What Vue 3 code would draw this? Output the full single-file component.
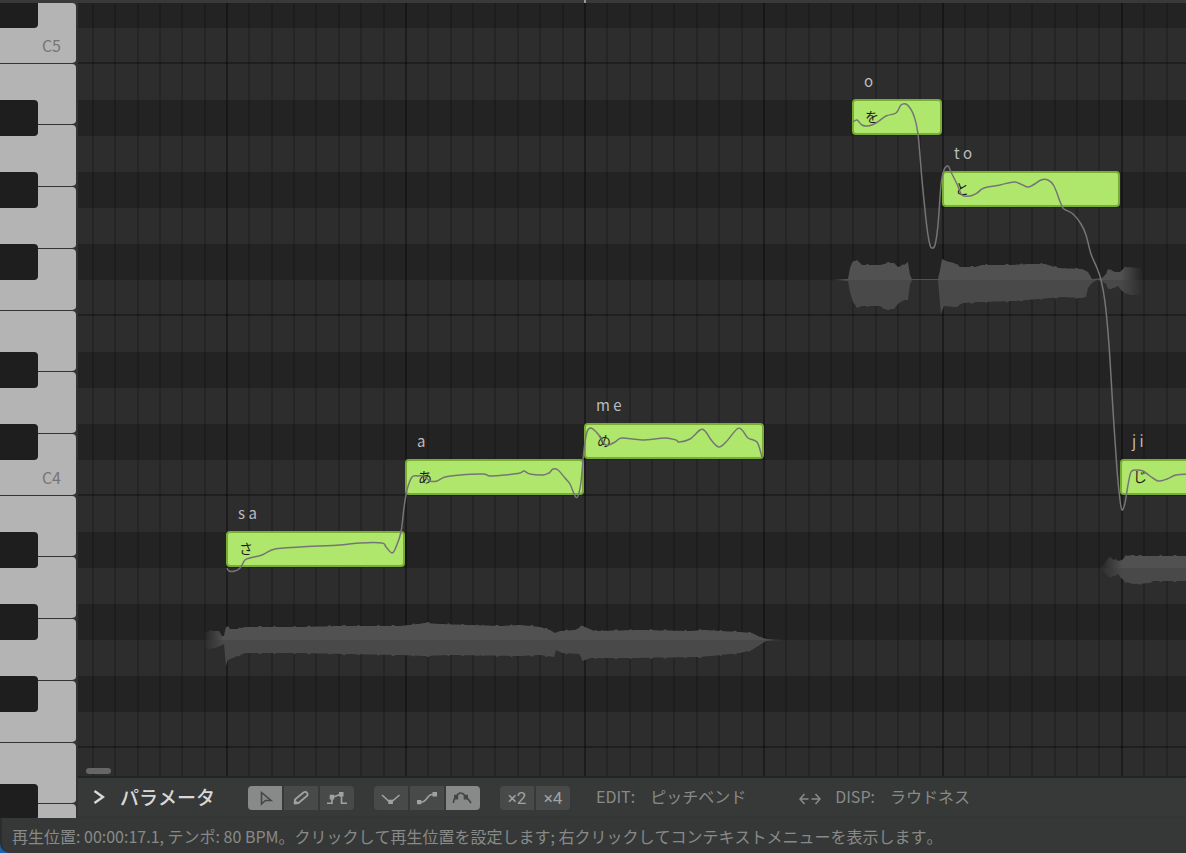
<template>
  <div class="editor">
    <!-- ルーラー -->
    <div class="ruler">
      <span class="ruler-tick"></span>
    </div>

    <main class="workspace">
      <!-- 鍵盤 -->
      <div class="keyboard">
        <div
          v-for="key in whiteKeys"
          :key="key.id"
          class="white-key"
          :style="{ height: key.height + 'px' }"
        >
          <span v-if="key.label" class="key-label">{{ key.label }}</span>
        </div>
        <div
          v-for="top in blackKeys"
          :key="top"
          class="black-key"
          :style="{ top: top - ORIGIN_Y + 'px' }"
        ></div>
      </div>

      <section class="main-column">
        <!-- ピアノロール -->
        <div class="piano-roll">
          <div class="rows">
            <div
              v-for="row in rows"
              :key="row.id"
              class="row"
              :class="{ dark: row.dark, octave: row.line }"
            ></div>
          </div>

          <svg class="layer" aria-hidden="true">
            <defs>
              <linearGradient id="fade-a" gradientUnits="userSpaceOnUse" x1="833" y1="0" x2="1143" y2="0">
                <stop offset="0" stop-color="#fff" stop-opacity="0" />
                <stop offset="0.04" stop-color="#fff" />
                <stop offset="0.93" stop-color="#fff" />
                <stop offset="1" stop-color="#fff" stop-opacity="0" />
              </linearGradient>
              <linearGradient id="fade-b" gradientUnits="userSpaceOnUse" x1="203" y1="0" x2="787" y2="0">
                <stop offset="0" stop-color="#fff" stop-opacity="0" />
                <stop offset="0.035" stop-color="#fff" />
                <stop offset="0.965" stop-color="#fff" />
                <stop offset="1" stop-color="#fff" stop-opacity="0" />
              </linearGradient>
              <linearGradient id="fade-c" gradientUnits="userSpaceOnUse" x1="1099" y1="0" x2="1122" y2="0">
                <stop offset="0" stop-color="#fff" stop-opacity="0" />
                <stop offset="1" stop-color="#fff" />
              </linearGradient>
              <mask v-for="wave in waves" :id="'mask-' + wave.id" :key="wave.id" maskUnits="userSpaceOnUse" x="0" y="0" width="2000" height="1000">
                <rect width="2000" height="1000" :fill="`url(#fade-${wave.id})`" />
              </mask>
            </defs>
            <g :transform="`translate(${-ORIGIN_X} ${-ORIGIN_Y})`">
              <rect
                v-for="line in gridLines"
                :key="line.x"
                :x="line.x - 1"
                y="0"
                width="2"
                height="2000"
                :class="line.strong ? 'line-strong' : 'line-weak'"
              />
              <g v-for="wave in waves" :key="wave.id" :mask="`url(#mask-${wave.id})`">
                <path :d="wavePath(wave.up, wave.y, -1)" class="wave-up" />
                <path :d="wavePath(wave.down, wave.y, 1)" class="wave-down" />
              </g>
            </g>
          </svg>

          <div
            v-for="note in notes"
            :key="note.phoneme"
            class="note"
            :style="{
              left: note.x - ORIGIN_X + 'px',
              top: note.y - ORIGIN_Y + 'px',
              width: note.width + 'px',
            }"
          >
            <span class="phoneme">{{ note.phoneme }}</span>
            <span class="lyric">{{ note.lyric }}</span>
          </div>

          <!-- ピッチカーブ -->
          <svg class="layer" aria-hidden="true">
            <g :transform="`translate(${-ORIGIN_X} ${-ORIGIN_Y})`">
              <path v-for="(curve, i) in pitchCurves" :key="i" :d="smoothPath(curve)" class="pitch" />
            </g>
          </svg>

          <div class="scroll-thumb"></div>
        </div>

        <!-- パラメータバー -->
        <div class="param-bar">
          <button class="param-toggle" type="button">
            <svg width="12" height="16" viewBox="0 0 12 16">
              <path d="M1.5 2 L10 8 L1.5 14" fill="none" stroke="currentColor" stroke-width="2.5" />
            </svg>
            <span>パラメータ</span>
          </button>

          <div class="tool-group">
            <button class="tool active" type="button" aria-label="選択">
              <svg viewBox="0 0 34 24">
                <path d="M13.5 6.5 L23 14.5 L17.5 14.5 L13.5 18 Z" fill="none" stroke="currentColor" stroke-width="1.6" />
              </svg>
            </button>
            <button class="tool" type="button" aria-label="鉛筆">
              <svg viewBox="0 0 34 24">
                <path d="M10.5 17.5 L11 13.5 L19.5 6.5 Q21.5 5.2 23 6.7 Q24.3 8.5 22.8 10 L14.5 17 Z" fill="none" stroke="currentColor" stroke-width="1.8" stroke-linejoin="round" />
                <path d="M10 18 L10.8 13.5 L14.8 17.2 Z" fill="currentColor" />
              </svg>
            </button>
            <button class="tool" type="button" aria-label="ノート移動">
              <svg viewBox="0 0 34 24">
                <path d="M7 17.3 H12 V11.5 L21.5 8 V17.3 H27" fill="none" stroke="currentColor" stroke-width="1.6" />
                <path d="M9.7 8.8 h4.5 v4.7 h-4.5 Z M19 6 h4.5 v4.5 h-4.5 Z" fill="currentColor" />
              </svg>
            </button>
          </div>

          <div class="tool-group">
            <button class="tool" type="button" aria-label="折れ線">
              <svg viewBox="0 0 34 24">
                <path d="M8 9 L14.5 15 H18.5 L25.5 9" fill="none" stroke="currentColor" stroke-width="1.6" />
                <path d="M14.3 13.7 h4.6 v4.3 h-4.6 Z" fill="currentColor" />
              </svg>
            </button>
            <button class="tool" type="button" aria-label="S字曲線">
              <svg viewBox="0 0 34 24">
                <path d="M9 16 H12 C16.5 16 17.5 8.5 22 8.5 H25" fill="none" stroke="currentColor" stroke-width="1.6" />
                <path d="M7 14 h4.3 v4.3 h-4.3 Z M22.5 6 h4.5 v4.5 h-4.5 Z" fill="currentColor" />
              </svg>
            </button>
            <button class="tool active" type="button" aria-label="曲線">
              <svg viewBox="0 0 34 24">
                <path d="M7.3 17 C7.8 14 8.5 12 10 11 C11.5 8 12.5 7 14.5 7 C17 7 18 8 19.5 11 C22 12.5 23.5 14.5 25 17" fill="none" stroke="currentColor" stroke-width="1.6" />
                <path d="M8 8.8 h4.2 v4.6 h-4.2 Z M17.7 8.8 h4.3 v4.6 h-4.3 Z" fill="currentColor" />
              </svg>
            </button>
          </div>

          <div class="tool-group">
            <button class="tool" type="button">×2</button>
            <button class="tool" type="button">×4</button>
          </div>

          <div class="field">
            <label for="edit-param">EDIT:</label>
            <select id="edit-param">
              <option>ピッチベンド</option>
            </select>
          </div>

          <button class="swap" type="button" aria-label="入れ替え">
            <svg width="22" height="14" viewBox="0 0 22 14">
              <path d="M5.5 2 L1 7 L5.5 12 M1 7 H9.5 M16.5 2 L21 7 L16.5 12 M21 7 H12.5" fill="none" stroke="currentColor" stroke-width="1.6" />
            </svg>
          </button>

          <div class="field">
            <label for="disp-param">DISP:</label>
            <select id="disp-param">
              <option>ラウドネス</option>
            </select>
          </div>
        </div>
      </section>
    </main>

    <footer class="status-bar">
      再生位置: 00:00:17.1, テンポ: 80 BPM。クリックして再生位置を設定します; 右クリックしてコンテキストメニューを表示します。
    </footer>
  </div>
</template>

<script setup>
// ピアノロール左上の座標
const ORIGIN_X = 78;
const ORIGIN_Y = 3;

const ROW_HEIGHT = 36;
const OCTAVE = ROW_HEIGHT * 12;
const STEP = 22.37;

// C#5 から下に向かう半音の並び (true = 黒鍵)
const pattern = [true, false, false, true, false, true, false, true, false, false, true, false];
const rows = Array.from({ length: 24 }, (_, i) => ({
  id: i,
  dark: pattern[i % 12],
  line: i % 12 === 1 || i % 12 === 8,
}));

const keyBottom = (i) => Math.floor(64.2 + (i * OCTAVE) / 7);
const whiteKeys = Array.from({ length: 14 }, (_, i) => ({
  id: i,
  height: i === 0 ? keyBottom(0) - ORIGIN_Y : keyBottom(i) - keyBottom(i - 1),
  label: i % 7 === 0 ? "C" + (5 - i / 7) : "",
}));

const blackKeys = rows.filter((r) => r.dark).map((r) => r.id * ROW_HEIGHT - 8);

const gridLines = Array.from({ length: 90 }, (_, i) => ({
  x: Math.round(227 + (i - 6) * STEP),
  strong: (i - 6) % 8 === 0,
}));

const notes = [
  { lyric: "さ", phoneme: "s a", x: 226, y: 531, width: 179 },
  { lyric: "あ", phoneme: "a", x: 405, y: 459, width: 179 },
  { lyric: "め", phoneme: "m e", x: 584, y: 423, width: 180 },
  { lyric: "を", phoneme: "o", x: 852, y: 99, width: 90 },
  { lyric: "と", phoneme: "t o", x: 942, y: 171, width: 178 },
  { lyric: "じ", phoneme: "j i", x: 1120, y: 459, width: 179 },
];

const pitchCurves = [
  [
    [227, 568], [229, 571], [235, 571], [240, 568], [245, 560], [250, 558], [262, 555],
    [275, 549], [300, 547], [340, 545], [360, 543], [382, 543], [386, 547], [392, 553],
    [396, 547], [401, 532], [404, 508], [407, 490], [412, 477], [418, 476], [424, 476],
    [430, 481], [437, 481], [445, 477], [460, 475], [483, 474], [490, 476], [505, 475],
    [520, 473], [524, 471], [530, 474], [543, 475], [549, 473], [553, 469], [558, 470],
    [565, 478], [570, 484], [575, 496], [578, 496], [581, 482], [584, 450], [587, 432],
    [591, 428], [598, 434], [606, 445], [615, 442], [622, 438], [642, 440], [665, 438],
    [676, 440], [679, 442], [690, 439], [700, 430], [705, 431], [712, 441], [719, 447],
    [726, 442], [737, 429], [742, 430], [748, 438], [757, 442], [762, 457],
  ],
  [
    [853, 122], [857, 120], [862, 125], [868, 126], [876, 123], [886, 116], [896, 113],
    [901, 105], [906, 104], [910, 108], [914, 116], [918, 134], [922, 180], [927, 228],
    [930, 245], [932, 248], [935, 245], [938, 225], [941, 185], [944, 170], [948, 166],
    [951, 172], [957, 184], [962, 195], [970, 196], [977, 193], [984, 188], [1000, 185],
    [1015, 182], [1027, 187], [1033, 185], [1041, 180], [1048, 180], [1054, 186],
    [1061, 204], [1064, 209], [1073, 214], [1081, 224], [1086, 235], [1091, 254],
    [1097, 268], [1101, 280], [1105, 302], [1109, 345], [1113, 410], [1117, 470],
    [1120, 500], [1122, 510], [1125, 503], [1128, 485], [1131, 472], [1136, 470],
    [1143, 471], [1150, 476], [1158, 481], [1167, 479], [1176, 475], [1190, 474],
    [1240, 473], [1299, 476],
  ],
];

// 波形の包絡線 [x, 振幅]
const waves = [
  {
    id: "a",
    y: 280,
    up: [
      [833, 1], [848, 1], [850, 12], [852, 17], [857, 20], [862, 15], [880, 15], [888, 17],
      [894, 17], [898, 13], [904, 15], [908, 18], [910, 5], [912, 1], [938, 1], [940, 10],
      [942, 21], [946, 19], [954, 17], [960, 13], [975, 13], [982, 15], [1010, 15], [1030, 16],
      [1045, 16], [1058, 12], [1082, 11], [1088, 8], [1092, 1], [1102, 2], [1106, 6],
      [1108, 11], [1115, 8], [1120, 8], [1124, 12], [1130, 13], [1143, 11],
    ],
    down: [
      [833, 0], [848, 1], [850, 12], [852, 19], [857, 28], [862, 26], [880, 26], [884, 29],
      [894, 29], [898, 24], [903, 20], [908, 20], [910, 4], [912, 0], [938, 0], [940, 24],
      [941, 34], [944, 26], [955, 27], [963, 23], [980, 22], [1015, 21], [1050, 18],
      [1062, 17], [1082, 18], [1086, 17], [1088, 8], [1092, 3], [1097, 0], [1102, 1],
      [1106, 4], [1108, 9], [1114, 8], [1118, 6], [1122, 11], [1130, 15], [1143, 15],
    ],
  },
  {
    id: "b",
    y: 640,
    up: [
      [203, 8], [210, 9], [219, 9], [222, 4], [224, 4], [226, 12], [228, 14], [230, 11],
      [238, 11], [245, 13], [300, 13], [340, 14], [400, 14], [418, 16], [425, 17], [440, 16],
      [470, 15], [500, 14], [520, 15], [540, 13], [550, 10], [555, 7], [560, 9], [575, 10],
      [583, 14], [594, 9], [640, 10], [690, 9], [705, 10], [720, 9], [740, 8], [752, 7],
      [758, 4], [766, 1], [787, 0],
    ],
    down: [
      [203, 9], [215, 8], [220, 6], [224, 4], [226, 25], [228, 20], [235, 17], [245, 13],
      [300, 13], [345, 14], [400, 15], [425, 16], [450, 15], [520, 16], [540, 15], [554, 17],
      [556, 10], [562, 13], [580, 14], [583, 21], [590, 18], [630, 18], [700, 17], [740, 13],
      [752, 10], [758, 6], [766, 1], [787, 0],
    ],
  },
  {
    id: "c",
    y: 568,
    up: [
      [1099, 0], [1104, 4], [1109, 11], [1114, 8], [1116, 9], [1118, 7], [1122, 8],
      [1126, 12], [1133, 13], [1136, 12], [1299, 12],
    ],
    down: [
      [1099, 0], [1104, 4], [1109, 9], [1115, 8], [1118, 6], [1121, 10], [1126, 14],
      [1133, 16], [1150, 15], [1153, 13], [1299, 13],
    ],
  },
];

// 包絡線を 1px ごとに補間し、細かい揺れを加える
const wavePath = (points, y, dir) => {
  const first = points[0][0];
  const last = points[points.length - 1][0];
  let d = `M${first} ${y}`;
  let k = 0;
  for (let x = first; x <= last; x += 1) {
    while (k < points.length - 2 && x > points[k + 1][0]) k++;
    const [x0, a0] = points[k];
    const [x1, a1] = points[k + 1];
    let amp = a0 + ((a1 - a0) * (x - x0)) / (x1 - x0);
    if (amp > 7 && Math.sin(x * 0.9) + Math.sin(x * 0.37) > 1.2) amp += 1;
    d += ` L${x} ${(y + dir * amp).toFixed(1)}`;
  }
  return `${d} L${last} ${y} Z`;
};

// Catmull-Rom をベジェ曲線に変換
const smoothPath = (p) => {
  let d = `M${p[0][0]} ${p[0][1]}`;
  for (let i = 0; i < p.length - 1; i++) {
    const a = p[i - 1] || p[i];
    const b = p[i];
    const c = p[i + 1];
    const e = p[i + 2] || c;
    d += ` C${b[0] + (c[0] - a[0]) / 6} ${b[1] + (c[1] - a[1]) / 6}`;
    d += ` ${c[0] - (e[0] - b[0]) / 6} ${c[1] - (e[1] - b[1]) / 6} ${c[0]} ${c[1]}`;
  }
  return d;
};
</script>

<style>
body {
  margin: 0;
  background: #1b62b4;
}
</style>

<style scoped>
.editor {
  display: flex;
  flex-direction: column;
  height: 100vh;
  overflow: hidden;
  font-family: "Noto Sans CJK JP", sans-serif;
  font-size: 16px;
  font-kerning: none;
  text-spacing-trim: space-all;
  color: #888a89;
}

.ruler {
  flex: none;
  height: 3px;
  background: #383a39;
  position: relative;
}

.ruler-tick {
  position: absolute;
  left: 584px;
  top: 0;
  width: 2px;
  height: 3px;
  background: #969696;
}

.workspace {
  flex: 1;
  min-height: 0;
  display: flex;
  background: #313333;
}

/* 鍵盤 */
.keyboard {
  flex: none;
  width: 76px;
  margin-right: 2px;
  position: relative;
  overflow: hidden;
  background: #333434;
}

.white-key {
  box-sizing: border-box;
  display: flex;
  align-items: flex-end;
  justify-content: flex-end;
  padding: 0 15px 8px 0;
  background: #b4b4b4;
  background-clip: padding-box;
  border-bottom: 1px solid #333434;
  border-radius: 0 4px 4px 0;
}

.key-label {
  line-height: 20px;
  color: #747474;
}

.black-key {
  position: absolute;
  left: 0;
  width: 38px;
  height: 36px;
  background: #1e1e1e;
  border-radius: 0 4px 4px 0;
}

.main-column {
  flex: 1;
  min-width: 0;
  display: flex;
  flex-direction: column;
}

/* ピアノロール */
.piano-roll {
  flex: 1;
  min-height: 0;
  position: relative;
  overflow: hidden;
  background: #2d2d2d;
}

.rows {
  position: absolute;
  inset: -11px 0 auto 0;
}

.row {
  box-sizing: border-box;
  height: 36px;
  background: #2d2d2d;
}

.row.dark {
  background: #232323;
}

.row.octave {
  border-bottom: 2px solid #1f1f1f;
}

.layer {
  position: absolute;
  inset: 0;
  width: 100%;
  height: 100%;
}

.line-weak {
  fill: rgba(0, 0, 0, 0.16);
}

.line-strong {
  fill: rgba(0, 0, 0, 0.36);
}

.wave-up {
  fill: #515151;
}

.wave-down {
  fill: #494949;
}

.pitch {
  fill: none;
  stroke: #757575;
  stroke-width: 1.5;
}

.note {
  position: absolute;
  box-sizing: border-box;
  height: 36px;
  padding-left: 11px;
  background: #afe66c;
  border: 2px solid #79ad34;
  border-radius: 4px;
}

.phoneme {
  position: absolute;
  left: 10px;
  top: -32px;
  font-size: 15px;
  line-height: 24px;
  color: #bcbcbc;
  white-space: nowrap;
}

.lyric {
  display: block;
  font-size: 14px;
  line-height: 30px;
  color: #1c1c1c;
}

.scroll-thumb {
  position: absolute;
  left: 8px;
  bottom: 2px;
  width: 25px;
  height: 6px;
  border-radius: 3px;
  background: #666;
}

/* パラメータバー */
.param-bar {
  flex: none;
  box-sizing: border-box;
  height: 42px;
  display: flex;
  align-items: center;
  padding-left: 15px;
  background: #373938;
  border-top: 2px solid #222323;
  box-shadow: inset 0 -2px #343635;
}

button {
  padding: 0;
  border: none;
  background: none;
  color: inherit;
  font: inherit;
  font-kerning: none;
}

.param-toggle {
  display: flex;
  align-items: center;
  gap: 15px;
  width: 155px;
  padding-bottom: 2px;
  font-size: 19px;
  font-weight: 500;
  line-height: 24px;
  color: #d8d8d8;
}

.tool-group {
  display: flex;
  gap: 2px;
  margin-right: 20px;
}

.tool {
  width: 34px;
  height: 24px;
  background: #484a49;
  color: #a0a2a1;
  font-family: Roboto, sans-serif;
  font-size: 17px;
  line-height: 24px;
}

.tool svg {
  display: block;
  width: 34px;
  height: 24px;
}

.tool:first-child {
  border-radius: 4px 0 0 4px;
}

.tool:last-child {
  border-radius: 0 4px 4px 0;
}

.tool.active {
  background: #888a89;
  color: #444645;
}

.field {
  display: flex;
  align-items: center;
  gap: 15px;
  margin-left: 6px;
  padding-bottom: 4px;
  line-height: 24px;
}

.field select {
  appearance: none;
  margin: 0;
  padding: 0;
  border: none;
  background: none;
  color: inherit;
  font: inherit;
  font-kerning: none;
}

.swap {
  display: flex;
  margin: 2px 8px 0 52px;
}

.status-bar {
  flex: none;
  box-sizing: border-box;
  height: 35px;
  padding-left: 10px;
  line-height: 36px;
  white-space: nowrap;
  overflow: hidden;
  background: #363837;
  border-left: 2px solid #2b2d2c;
  border-radius: 0 0 0 10px;
}
</style>
